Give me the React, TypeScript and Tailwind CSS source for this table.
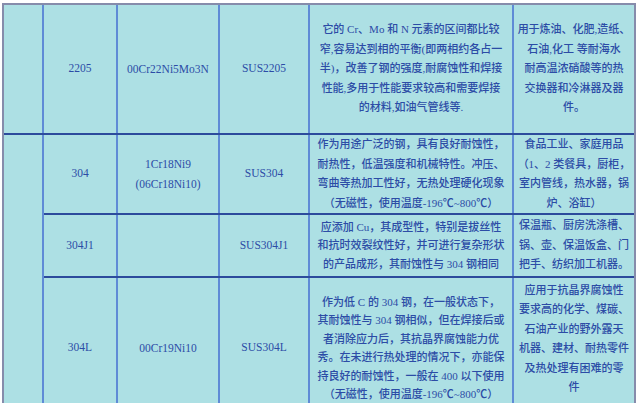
const font = {
  fontFamily: '"Liberation Serif", "Noto Sans CJK SC", serif',
};

type Row = {
  grade: string;
  cn: string[];
  jis: string;
  desc: string[];
  use: string[];
  h: string;
};

const rows: Row[] = [
  {
    grade: '2205',
    cn: ['00Cr22Ni5Mo3N'],
    jis: 'SUS2205',
    desc: [
      '它的 Cr、Mo 和 N 元素的区间都比较',
      '窄,容易达到相的平衡(即两相约各占一',
      '半)，改善了钢的强度,耐腐蚀性和焊接',
      '性能,多用于性能要求较高和需要焊接',
      '的材料,如油气管线等.',
    ],
    use: ['用于炼油、化肥,造纸、', '石油,化工 等耐海水', '耐高温浓硝酸等的热', '交换器和冷淋器及器', '件。'],
    h: 'h-[129px]',
  },
  {
    grade: '304',
    cn: ['1Cr18Ni9', '(06Cr18Ni10)'],
    jis: 'SUS304',
    desc: [
      '作为用途广泛的钢，具有良好耐蚀性，',
      '耐热性，低温强度和机械特性。冲压、',
      '弯曲等热加工性好，无热处理硬化现象',
      '（无磁性，使用温度-196℃~800℃）',
    ],
    use: ['食品工业、家庭用品', '（1、2 类餐具，厨柜，', '室内管线，热水器，锅', '炉、浴缸）'],
    h: 'h-[80px]',
  },
  {
    grade: '304J1',
    cn: [],
    jis: 'SUS304J1',
    desc: [
      '应添加 Cu，其成型性，特别是拔丝性',
      '和抗时效裂纹性好，并可进行复杂形状',
      '的产品成形，其耐蚀性与 304 钢相同',
    ],
    use: ['保温瓶、厨房洗涤槽、', '锅、壶、保温饭盒、门', '把手、纺织加工机器。'],
    h: 'h-[63px]',
  },
  {
    grade: '304L',
    cn: ['00Cr19Ni10'],
    jis: 'SUS304L',
    desc: [
      '作为低 C 的 304 钢，在一般状态下，',
      '其耐蚀性与 304 钢相似，但在焊接后或',
      '者消除应力后，其抗晶界腐蚀能力优',
      '秀。在未进行热处理的情况下，亦能保',
      '持良好的耐蚀性，一般在 400 以下使用',
      '（无磁性，使用温度-196℃~800℃）',
    ],
    use: ['应用于抗晶界腐蚀性', '要求高的化学、煤碳、', '石油产业的野外露天', '机器、建材、耐热零件', '及热处理有困难的零', '件'],
    h: 'h-[142px]',
  },
];

const cell =
  'border-2 border-x-[#5f8bd6] border-y-[#2c4b9c] text-center align-middle p-0';

function Lines({ lines, lh }: { lines: string[]; lh: string }) {
  return (
    <div className={`flex flex-col items-center ${lh}`}>
      {lines.map((l, i) => (
        <span key={i} className="whitespace-nowrap">
          {l}
        </span>
      ))}
    </div>
  );
}

export default function App() {
  return (
    <div className="w-[640px] h-[403px] overflow-hidden bg-white pt-[3px] pl-[2px]" style={font}>
      <div className="w-[634px] border-l-2 border-t-2 border-r-2 border-[#868cab] bg-[#ade0e4]">
        <table className="w-[630px] table-fixed border-collapse text-[11px] font-medium text-[#2c4ca6]">
          <colgroup>
            <col className="w-[39px]" />
            <col className="w-[74px]" />
            <col className="w-[102px]" />
            <col className="w-[90px]" />
            <col className="w-[204px]" />
            <col className="w-[121px]" />
          </colgroup>
          <tbody>
            {rows.map((r, i) => (
              <tr key={r.grade} className={r.h}>
                {i === 0 && <td className={`${cell} border-l-0 border-t-0`} />}
                {i === 1 && <td rowSpan={3} className={`${cell} border-l-0 border-b-0`} />}
                <td className={`${cell} text-[11.5px] ${i === 0 ? 'border-t-0' : ''}`}>{r.grade}</td>
                <td className={`${cell} text-[11.5px] ${i === 0 ? 'border-t-0' : ''}`}>
                  <Lines lines={r.cn} lh="leading-[20px]" />
                </td>
                <td className={`${cell} text-[11.5px] ${i === 0 ? 'border-t-0' : ''}`}>{r.jis}</td>
                <td className={`${cell} ${i === 0 ? 'border-t-0' : ''}`}>
                  <Lines lines={r.desc} lh={i >= 2 ? 'leading-[18.5px]' : 'leading-[19.5px]'} />
                </td>
                <td className={`${cell} border-r-0 ${i === 0 ? 'border-t-0' : ''} ${i === 3 ? 'pb-[18px]' : ''}`}>
                  <Lines lines={r.use} lh="leading-[19.5px]" />
                </td>
              </tr>
            ))}
          </tbody>
        </table>
      </div>
    </div>
  );
}
